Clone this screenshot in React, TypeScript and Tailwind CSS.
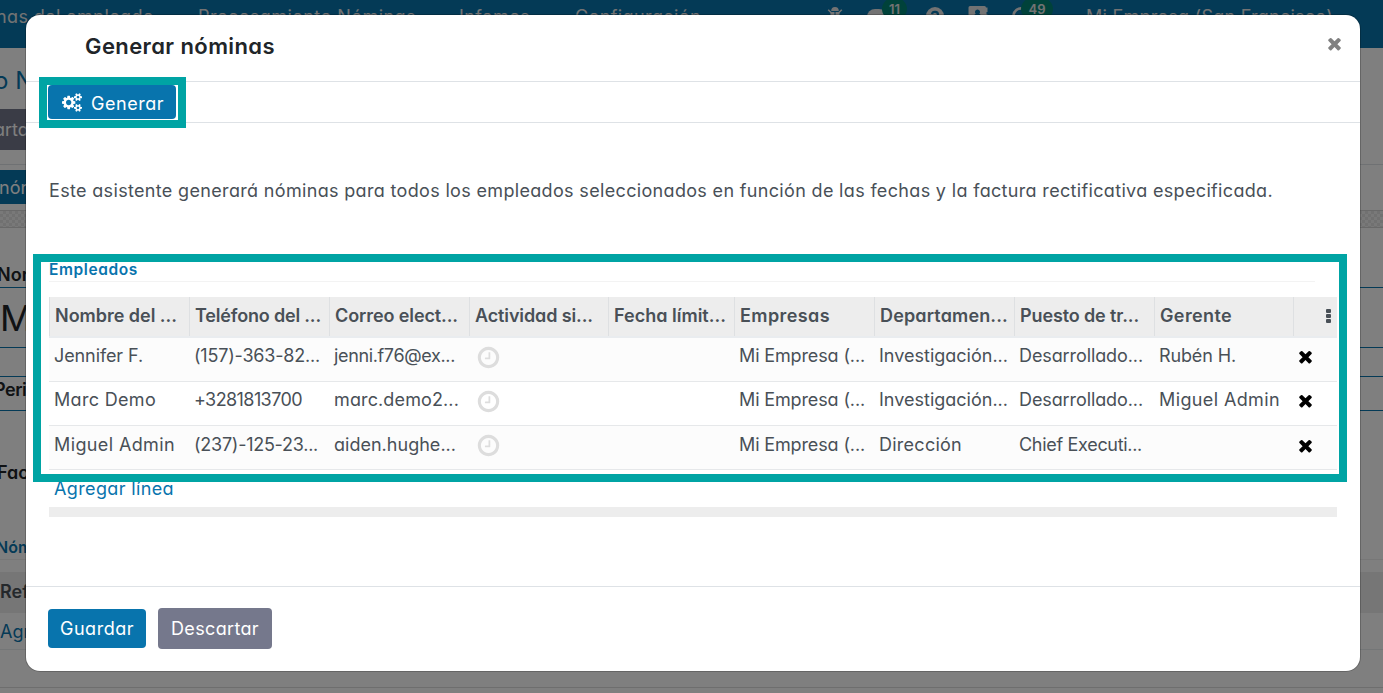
import React, { useLayoutEffect, useRef, useState } from "react";

/** Single-line text whose tracking is adjusted so that it fills a given width. */
function Fit({ w, className = "", children }: { w: number; className?: string; children: string }) {
  const ref = useRef<HTMLSpanElement>(null);
  const [spacing, setSpacing] = useState(0);
  useLayoutEffect(() => {
    if (!ref.current) return;
    ref.current.style.letterSpacing = "0px";
    const natural = ref.current.getBoundingClientRect().width;
    const next = (w - natural) / children.length;
    ref.current.style.letterSpacing = `${next}px`;
    setSpacing(next);
  }, [w, children]);
  return (
    <span ref={ref} className={`inline-block whitespace-pre ${className}`} style={{ letterSpacing: `${spacing}px` }}>
      {children}
    </span>
  );
}

const TimesIcon = ({ className }: { className: string }) => (
  <svg viewBox="0 0 1792 1792" fill="currentColor" className={className}>
    <path d="M1490 1322q0 40-28 68l-136 136q-28 28-68 28t-68-28l-294-294-294 294q-28 28-68 28t-68-28l-136-136q-28-28-28-68t28-68l294-294-294-294q-28-28-28-68t28-68l136-136q28-28 68-28t68 28l294 294 294-294q28-28 68-28t68 28l136 136q28 28 28 68t-28 68l-294 294 294 294q28 28 28 68z" />
  </svg>
);

const ClockIcon = ({ className }: { className: string }) => (
  <svg viewBox="0 0 1792 1792" fill="currentColor" className={className}>
    <path d="M1024 544v448q0 14-9 23t-23 9h-320q-14 0-23-9t-9-23v-64q0-14 9-23t23-9h224v-352q0-14 9-23t23-9h64q14 0 23 9t9 23zm416 352q0-148-73-273t-198-198-273-73-273 73-198 198-73 273 73 273 198 198 273 73 273-73 198-198 73-273zm224 0q0 209-103 385.5t-279.5 279.5-385.5 103-385.5-103-279.5-279.5-103-385.5 103-385.5 279.5-279.5 385.5-103 385.5 103 279.5 279.5 103 385.5z" />
  </svg>
);

const CogsIcon = ({ className }: { className: string }) => (
  <svg viewBox="0 0 1920 1792" fill="currentColor" className={className}>
    <path d="M896 896q0-106-75-181t-181-75-181 75-75 181 75 181 181 75 181-75 75-181zm768 512q0-52-38-90t-90-38-90 38-38 90q0 53 37.5 90.5t90.5 37.5 90.5-37.5 37.5-90.5zm0-1024q0-52-38-90t-90-38-90 38-38 90q0 53 37.5 90.5t90.5 37.5 90.5-37.5 37.5-90.5zm-384 421v185q0 10-7 19.5t-16 10.5l-155 24q-11 35-32 76 34 48 90 115 7 11 7 20 0 12-7 19-23 30-82.5 89.5t-78.5 59.5q-11 0-21-7l-115-90q-37 19-77 31-11 108-23 155-7 24-30 24h-186q-11 0-20-7.5t-10-17.5l-23-153q-34-10-75-31l-118 89q-7 7-20 7-11 0-21-8-144-133-144-160 0-9 7-19 10-14 41-53t47-61q-23-44-35-82l-152-24q-10-1-17-9.5t-7-19.5v-185q0-10 7-19.5t16-10.5l155-24q11-35 32-76-34-48-90-115-7-11-7-20 0-12 7-20 22-30 82-89t79-59q11 0 21 7l115 90q34-18 77-32 11-108 23-154 7-24 30-24h186q11 0 20 7.5t10 17.5l23 153q34 10 75 31l118-89q8-7 20-7 11 0 21 8 144 133 144 160 0 8-7 19-12 16-42 54t-45 60q23 48 34 82l152 23q10 2 17 10.5t7 19.5zm640 533v140q0 16-149 31-12 27-30 52 51 113 51 138 0 4-4 7-122 71-124 71-8 0-46-47t-52-68q-20 2-30 2t-30-2q-14 21-52 68t-46 47q-2 0-124-71-4-3-4-7 0-25 51-138-18-25-30-52-149-15-149-31v-140q0-16 149-31 13-29 30-52-51-113-51-138 0-4 4-7 4-2 35-20t59-34 30-16q8 0 46 46.5t52 67.5q20-2 30-2t30 2q51-71 92-112l6-2q4 0 124 70 4 3 4 7 0 25-51 138 17 23 30 52 149 15 149 31zm0-1024v140q0 16-149 31-12 27-30 52 51 113 51 138 0 4-4 7-122 71-124 71-8 0-46-47t-52-68q-20 2-30 2t-30-2q-14 21-52 68t-46 47q-2 0-124-71-4-3-4-7 0-25 51-138-18-25-30-52-149-15-149-31v-140q0-16 149-31 13-29 30-52-51-113-51-138 0-4 4-7 4-2 35-20t59-34 30-16q8 0 46 46.5t52 67.5q20-2 30-2t30 2q51-71 92-112l6-2q4 0 124 70 4 3 4 7 0 25-51 138 17 23 30 52 149 15 149 31z" />
  </svg>
);

const BugIcon = () => (
  <svg viewBox="0 0 16 18" className="h-[18px] w-4" fill="none" stroke="currentColor" strokeWidth="1.6">
    <path d="M4.200 4a3.800 4 0 0 1 7.600 0z" fill="currentColor" stroke="none" />
    <path d="M3.500 5H7.500V16C5 16 3.500 13.500 3.500 11zM12.500 5H8.500V16c2.500 0 4-2.500 4-5z" fill="currentColor" stroke="none" />
    <path d="M1.200 2.800 4.500 6M14.800 2.800 11.500 6M0 10h4M16 10h-4M2 16l2.500-3M14 16l-2.500-3" />
  </svg>
);

type Cell = [string, number] | null;

const HEADERS: Cell[] = [
  ["Nombre del ...", 122],
  ["Teléfono del ...", 126],
  ["Correo elect...", 123],
  ["Actividad si...", 118],
  ["Fecha límit...", 112],
  ["Empresas", 90],
  ["Departamen...", 128],
  ["Puesto de tr...", 119],
  ["Gerente", 72],
];

const ROWS: { left: Cell[]; right: Cell[] }[] = [
  {
    left: [["Jennifer F.", 89], ["(157)-363-82...", 126], ["jenni.f76@ex...", 121]],
    right: [["Mi Empresa (...", 126], ["Investigación...", 129], ["Desarrollado...", 124], ["Rubén H.", 77]],
  },
  {
    left: [["Marc Demo", 102], ["+3281813700", 108], ["marc.demo2...", 125]],
    right: [["Mi Empresa (...", 126], ["Investigación...", 129], ["Desarrollado...", 124], ["Miguel Admin", 121]],
  },
  {
    left: [["Miguel Admin", 121], ["(237)-125-23...", 124], ["aiden.hughe...", 122]],
    right: [["Mi Empresa (...", 126], ["Dirección", 83], ["Chief Executi...", 123], null],
  },
];

const GRID = "grid grid-cols-[140px_140px_140px_139px_126px_140px_140px_140px_139px_44px]";

function Background() {
  return (
    <div className="relative flex h-[693px] w-full flex-col overflow-hidden bg-white text-lg">
      <nav className="flex h-12 shrink-0 items-start bg-[#0874ad] pt-[3px] text-[18px] leading-[28px] text-[#e6e6e6]">
        <Fit w={158} className="-ml-[4px]">nas del empleado</Fit>
        <Fit w={218} className="ml-[44px]">Procesamiento Nóminas</Fit>
        <Fit w={71} className="ml-[43px]">Infomes</Fit>
        <Fit w={126} className="ml-[45px]">Configuración</Fit>
        <div className="ml-[126px] mt-[4px] flex items-start">
          <BugIcon />
          <span className="relative ml-[24px] mt-[2px] block h-4 w-5 rounded-full bg-current">
            <b className="absolute -top-[11px] left-[15px] flex h-[22px] w-[25px] items-center justify-center rounded-full bg-[#018575] text-[13px] font-semibold">11</b>
          </span>
          <svg viewBox="0 0 18 18" className="ml-[39px] size-[18px]">
            <circle cx="9" cy="9" r="9" fill="currentColor" />
            <path d="M6 7.200a3 2.700 0 1 1 3 3v1.500M9 13v2" fill="none" stroke="#0874ad" strokeWidth="2.200" />
          </svg>
          <svg viewBox="0 0 20 18" className="-mt-px ml-[24px] h-[18px] w-5" fill="currentColor">
            <path fillRule="evenodd" d="M2 0h14.500A1.500 1.500 0 0 1 18 1.500H19.500V6H18.500V8.500H19.500V13H18V18H0.500V1.500A1.500 1.500 0 0 1 2 0zM9.500 3.500a2.500 2.500 0 0 0-1.800 4.300L5 10h9l-2.700-2.200A2.500 2.500 0 0 0 9.500 3.500z" />
          </svg>
          <span className="relative ml-[24px] block">
            <svg viewBox="0 0 18 18" className="size-[18px]" fill="none" stroke="currentColor" strokeWidth="2.600">
              <path d="M10 1.500A7.500 7.500 0 1 0 16.500 9" />
            </svg>
            <b className="absolute -top-[9px] left-[9px] flex h-[22px] w-[32px] items-center justify-center rounded-full bg-[#018575] text-[13px] font-semibold">49</b>
          </span>
        </div>
        <Fit w={247} className="ml-[56px]">Mi Empresa (San Francisco)</Fit>
      </nav>
      <div className="flex h-[61px] shrink-0 items-center pt-[4px] text-[24px] text-[#0874ad]">
        <span className="-ml-[6px] whitespace-pre">o N</span>
      </div>
      <div className="flex h-[41px] w-[60px] shrink-0 items-center bg-[#75788c] text-[18px] text-white">
        <span className="-ml-[6px]">arta</span>
      </div>
      <div className="h-[15px] shrink-0 border-b border-[#dee2e6]" />
      <div className="h-[45px] shrink-0 pt-[5px]">
        <div className="flex h-[34px] w-[60px] items-center bg-[#0874ad] pt-px text-[18px] text-white">
          <span className="-ml-px">nón</span>
        </div>
      </div>
      <div className="h-[18px] shrink-0 border-y border-[#d2d2d2] bg-[#eeeeee] bg-[repeating-conic-gradient(#e2e2e2_0_25%,#f2f2f2_0_50%)] bg-[length:6px_6px]" />
      <div className="flex h-[60px] shrink-0 items-end border-b border-[#0874ad] text-[18px] font-semibold text-[#212529]">
        <span className="-ml-[3px] leading-[24px]">Nor</span>
      </div>
      <div className="flex h-[60px] shrink-0 items-center border-b border-[#0874ad] text-[36px] text-[#212529]">
        <span>M</span>
      </div>
      <div className="h-[29px] shrink-0 border-b border-[#0874ad]" />
      <div className="h-[34px] shrink-0 border-b border-[#0874ad] text-[18px] font-semibold leading-[26px] text-[#212529]">
        <span className="-ml-[6px] tracking-tight">Peri</span>
      </div>
      <div className="h-[124px] shrink-0 pt-[48px] text-[18px] font-semibold text-[#212529]">
        <span className="-ml-[3px]">Fac</span>
      </div>
      <div className="flex h-[25px] shrink-0 items-center border-b border-[#eeeeee] text-[16px] font-semibold text-[#0874ad]">
        <span className="-ml-[4px]">Nóm</span>
      </div>
      <div className="h-[12px] shrink-0" />
      <div className="h-[41px] shrink-0 bg-[#ededed] text-[18px] font-semibold leading-[39px] text-[#495057]">Ref</div>
      <div className="h-[37px] shrink-0 border-b border-[#e9ecef] text-[18px] leading-[38px] text-[#0874ad]">Agr</div>
      <div className="h-[38px] shrink-0 border-b border-[#dddddd]" />
      <div className="absolute inset-0 bg-black/50" />
    </div>
  );
}

function Row({ left, right, odd, last }: { left: Cell[]; right: Cell[]; odd: boolean; last: boolean }) {
  const lead = last ? "pt-[5px]" : "pt-[4px]";
  const cell = (c: Cell, i: number) => (
    <div key={i} className={`overflow-hidden pl-[5px] ${lead}`}>
      {c && <Fit w={c[1]}>{c[0]}</Fit>}
    </div>
  );
  return (
    <div className={`${GRID} h-11 border-b border-[#e6e8ea] leading-[28px] ${odd ? "bg-[#fcfcfc]" : "bg-white"}`}>
      {left.map(cell)}
      <div className="pl-[7px] pt-[7px] text-[#dddddd]">
        <ClockIcon className="size-[25px]" />
      </div>
      <div />
      {right.map((c, i) => cell(c, i + 5))}
      <div className={`pl-[3px] text-black ${last ? "pt-[10px]" : "pt-[9px]"}`}>
        <TimesIcon className="size-[19px]" />
      </div>
    </div>
  );
}

export default function App() {
  return (
    <div className="relative h-[693px] w-full overflow-hidden font-['Inter','Liberation_Sans',sans-serif] [font-feature-settings:'cv11']">
      <Background />
      <div
        role="dialog"
        className="absolute left-[26px] top-[15px] flex h-[656px] w-[1334px] flex-col rounded-[14px] bg-white text-[18px] text-[#495057] shadow-[0_0_0_1px_rgba(0,0,0,0.2)]"
      >
        <header className="flex h-[67px] shrink-0 items-center justify-between border-b border-[#dee2e6] pb-[3px] pl-[59px] pr-[16px]">
          <h1 className="text-[22px] font-semibold text-[#212529]">
            <Fit w={190}>Generar nóminas</Fit>
          </h1>
          <TimesIcon className="mb-[6px] size-[19px] text-[#808080]" />
        </header>

        <div className="relative h-[41px] shrink-0 border-b border-[#dee2e6] pl-[22px] pt-[3px]">
          <button className="flex h-[34px] w-[128px] items-center rounded-[4px] bg-[#0874ad] pl-[14px] text-white">
            <CogsIcon className="h-[19px] w-[20px]" />
            <Fit w={73} className="ml-[9px] pt-[2px]">Generar</Fit>
          </button>
          <div className="pointer-events-none absolute -top-[5px] left-[13px] h-[51px] w-[147px] border-8 border-[#00a4a4]" />
        </div>

        <main className="relative flex h-[464px] shrink-0 flex-col border-b border-[#dee2e6] pl-[23px] pr-[23px]">
          <p className="h-[82px] pt-[54px] leading-[28px]">
            <Fit w={1224}>
              Este asistente generará nóminas para todos los empleados seleccionados en función de las fechas y la factura rectificativa especificada.
            </Fit>
          </p>
          <h2 className="mt-[53px] flex h-[24px] w-[1266px] items-center border-b border-[#f3f3f3] text-[15.5px] font-semibold text-[#0874ad]">
            <Fit w={89}>Empleados</Fit>
          </h2>
          <div className="mt-[15px]">
            <div className={`${GRID} h-[41px] border-b-2 border-[#e9ecef] bg-[#ededed] font-semibold leading-[38px]`}>
              {HEADERS.map((h, i) => (
                <div key={i} className="border-l border-[#dee0e2] pl-[5px]">
                  {h && <Fit w={h[1]}>{h[0]}</Fit>}
                </div>
              ))}
              <div className="flex flex-col items-end justify-center gap-px border-l border-[#dee0e2] pb-[2px] pr-[6px]">
                <i className="block h-1 w-[5px] rounded-[1px] bg-[#495057]" />
                <i className="block h-1 w-[5px] rounded-[1px] bg-[#495057]" />
                <i className="block h-1 w-[5px] rounded-[1px] bg-[#495057]" />
              </div>
            </div>
            {ROWS.map((r, i) => (
              <Row key={i} left={r.left} right={r.right} odd={i % 2 === 0} last={i === ROWS.length - 1} />
            ))}
          </div>
          <div className="h-[37px] pl-[5px] pt-[5px] leading-[28px] text-[#0874ad]">
            <Fit w={120}>Agregar línea</Fit>
          </div>
          <div className="h-[10px] bg-[#ededed]" />
          <div className="pointer-events-none absolute left-[7px] top-[131px] h-[228px] w-[1314px] border-8 border-[#00a4a4]" />
        </main>

        <footer className="flex flex-1 items-center gap-3 pb-[2px] pl-[22px]">
          <button className="flex h-[39px] w-[98px] items-center justify-center rounded-[4px] bg-[#0874ad] pt-px text-white">
            <Fit w={74}>Guardar</Fit>
          </button>
          <button className="flex h-[41px] w-[114px] items-center justify-center rounded-[4px] bg-[#75788c] pt-px text-white">
            <Fit w={88}>Descartar</Fit>
          </button>
        </footer>
      </div>
    </div>
  );
}
